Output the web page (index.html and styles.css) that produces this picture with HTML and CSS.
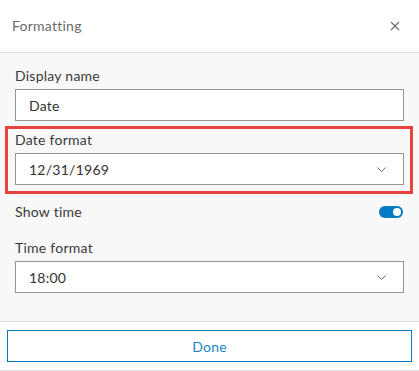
FILE: index.html
```html
<!DOCTYPE html>
<html lang="en">
<head>
    <meta charset="UTF-8">
    <meta name="viewport" content="width=device-width, initial-scale=1.0">
    <title>Formatting</title>
    <link rel="stylesheet" href="styles.css">
</head>
<body>

    <div class="panel">
        <!-- Header -->
        <div class="panel-header">
            <span class="panel-title">Formatting</span>
            <button class="close-btn" aria-label="Close">
                <svg width="10" height="10" viewBox="0 0 10 10">
                    <path d="M1 1L9 9M9 1L1 9" stroke="#6a6a6a" stroke-width="1.1" fill="none"/>
                </svg>
            </button>
        </div>

        <!-- Fields -->
        <div class="panel-body">
            <div class="field">
                <label class="field-label">Display name</label>
                <div class="input-box">Date</div>
            </div>

            <div class="field highlight">
                <label class="field-label">Date format</label>
                <div class="input-box select">
                    <span>12/31/1969</span>
                    <svg class="chevron" width="9" height="5" viewBox="0 0 9 5">
                        <path d="M0.5 0.5L4.5 4.5L8.5 0.5" stroke="#6a6a6a" stroke-width="1" fill="none"/>
                    </svg>
                </div>
            </div>

            <div class="toggle-row">
                <span class="field-label">Show time</span>
                <span class="toggle"><span class="knob"></span></span>
            </div>

            <div class="field">
                <label class="field-label">Time format</label>
                <div class="input-box select">
                    <span>18:00</span>
                    <svg class="chevron" width="9" height="5" viewBox="0 0 9 5">
                        <path d="M0.5 0.5L4.5 4.5L8.5 0.5" stroke="#6a6a6a" stroke-width="1" fill="none"/>
                    </svg>
                </div>
            </div>
        </div>

        <!-- Footer -->
        <div class="panel-footer">
            <button class="done-btn">Done</button>
        </div>
    </div>

</body>
</html>
```
FILE: styles.css
```css
        * {
            margin: 0;
            padding: 0;
            box-sizing: border-box;
            font-family: Lato, "Noto Sans", sans-serif;
            letter-spacing: 0.25px;
        }

        body {
            background: #ffffff;
            width: 419px;
            height: 371px;
            overflow: hidden;
        }

        .panel {
            display: flex;
            flex-direction: column;
            height: 371px;
        }

        /* Header */
        .panel-header {
            height: 53px;
            display: flex;
            align-items: center;
            justify-content: space-between;
            padding: 0 16px 0 12px;
            border-bottom: 1px solid #dfdfdf;
            background: #ffffff;
        }

        .panel-title {
            font-size: 14px;
            color: #6a6a6a;
            margin-top: -1px;
        }

        .close-btn {
            background: none;
            border: none;
            width: 16px;
            height: 16px;
            display: flex;
            align-items: center;
            justify-content: center;
        }

        /* Body */
        .panel-body {
            background: #f8f8f8;
            padding: 13px 15px 0 15px;
            height: 269px;
            border-bottom: 1px solid #dfdfdf;
        }

        .field-label {
            display: block;
            font-size: 14px;
            line-height: 20px;
            color: #3a3a3a;
            margin-bottom: 3px;
        }

        .input-box {
            height: 32px;
            background: #ffffff;
            border: 1px solid #959595;
            padding: 0 13px;
            display: flex;
            align-items: center;
            justify-content: space-between;
            font-size: 14px;
            color: #323232;
        }

        .chevron {
            margin-right: 4px;
        }

        /* Red annotation box around Date format */
        .highlight {
            border: 3px solid #e8423f;
            margin: 5px -9px 0 -10px;
            padding: 1px 6px 6px 7px;
        }

        .toggle-row {
            display: flex;
            align-items: center;
            justify-content: space-between;
            margin-top: 8px;
            margin-bottom: 16px;
        }

        .toggle-row .field-label {
            margin-bottom: 0;
        }

        .toggle {
            width: 24px;
            height: 12px;
            border-radius: 6px;
            background: #007ac2;
            display: flex;
            align-items: center;
            justify-content: flex-end;
            padding: 0 2px;
            margin-right: 1px;
        }

        .knob {
            width: 8px;
            height: 8px;
            border-radius: 50%;
            background: #ffffff;
        }

        /* Footer */
        .panel-footer {
            padding: 8px 7px;
            border-bottom: 1px solid #dfdfdf;
            background: #ffffff;
        }

        .done-btn {
            width: 100%;
            height: 32px;
            background: #ffffff;
            border: 1px solid #007ac2;
            color: #1a84c8;
            font-size: 14px;
        }
```
